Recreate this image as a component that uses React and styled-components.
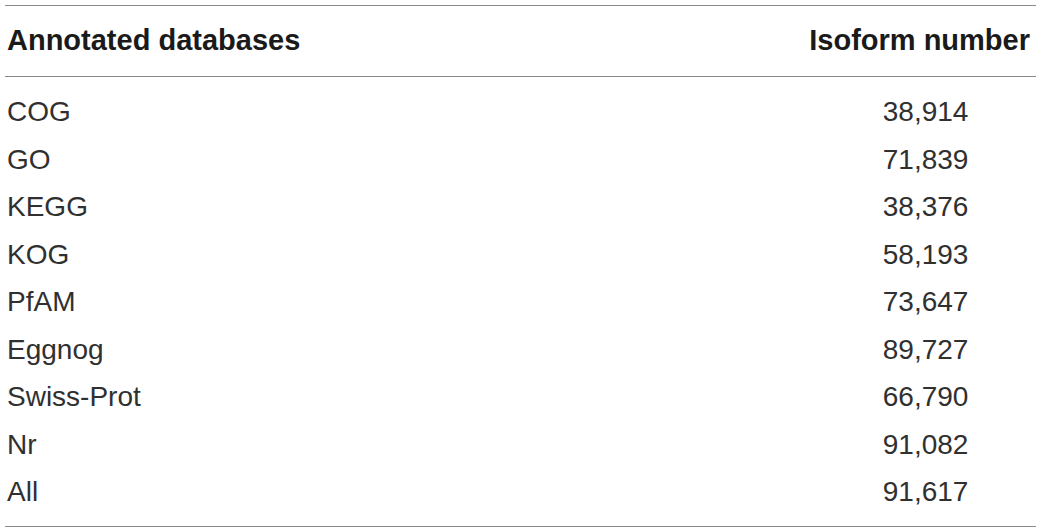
import React from "react";
import styled, { createGlobalStyle } from "styled-components";

const Global = createGlobalStyle`
  html, body { margin: 0; padding: 0; background: #fff; }
  body { font-family: "Liberation Sans", Arial, Helvetica, sans-serif; }
`;

const Wrap = styled.div`
  padding: 5px 4px 0 5px;
`;

const Table = styled.div`
  display: grid;
  grid-template-columns: 1fr auto;
  border-top: 1px solid #8a8a8a;
  border-bottom: 1px solid #8a8a8a;
  color: #1f1f1f;
`;

const Head = styled.div`
  display: contents;
`;

const HeadCell = styled.div`
  font-size: 29px;
  font-weight: 700;
  line-height: 36px;
  padding: 16px 6px 18px 2px;
  text-align: ${(p) => (p.$num ? "right" : "left")};
  border-bottom: 1px solid #8a8a8a;
  color: #1a1a1a;
`;

const Cell = styled.div`
  font-size: 28px;
  font-weight: 400;
  line-height: 47.5px;
  padding-left: ${(p) => (p.$num ? "8px" : "2px")};
  padding-right: 0;
  text-align: ${(p) => (p.$num ? "center" : "left")};
  padding-top: ${(p) => (p.$first ? "11px" : "0")};
  padding-bottom: ${(p) => (p.$last ? "10px" : "0")};
  color: #303030;
`;

const rows = [
  ["COG", "38,914"],
  ["GO", "71,839"],
  ["KEGG", "38,376"],
  ["KOG", "58,193"],
  ["PfAM", "73,647"],
  ["Eggnog", "89,727"],
  ["Swiss-Prot", "66,790"],
  ["Nr", "91,082"],
  ["All", "91,617"],
];

export default function App() {
  return (
    <>
      <Global />
      <Wrap>
        <Table>
          <Head>
            <HeadCell>Annotated databases</HeadCell>
            <HeadCell $num>Isoform number</HeadCell>
          </Head>
          {rows.map(([name, num], i) => (
            <React.Fragment key={name}>
              <Cell $first={i === 0} $last={i === rows.length - 1}>
                {name}
              </Cell>
              <Cell $num $first={i === 0} $last={i === rows.length - 1}>
                {num}
              </Cell>
            </React.Fragment>
          ))}
        </Table>
      </Wrap>
    </>
  );
}
